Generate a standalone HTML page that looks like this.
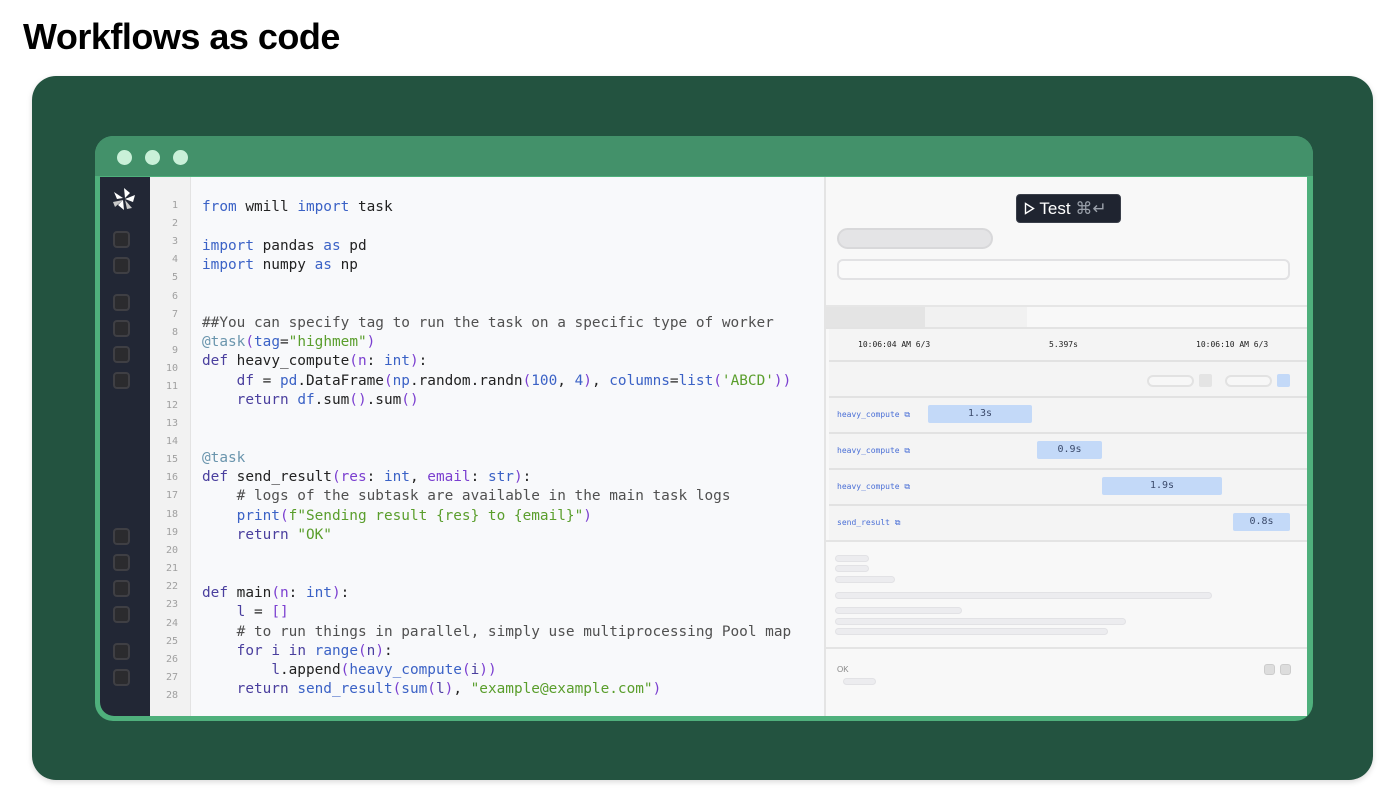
<!DOCTYPE html>
<html><head><meta charset="utf-8"><style>
*{margin:0;padding:0;box-sizing:border-box}
body{width:1398px;height:804px;background:#fff;position:relative;overflow:hidden;font-family:"Liberation Sans",sans-serif}
.abs{position:absolute}
h1{position:absolute;left:23px;top:16px;font-size:36px;font-weight:bold;color:#000;letter-spacing:-0.5px}
.outer{left:32px;top:76px;width:1341px;height:704px;background:#235340;border-radius:24px;box-shadow:0 2px 6px rgba(0,0,0,.15)}
.win{left:95px;top:136px;width:1218px;height:585px;background:#4fb07c;border-radius:18px;overflow:hidden}
.title{left:0;top:0;width:1218px;height:40px;background:#43916a}
.dot{top:14px;width:15px;height:15px;border-radius:50%;background:#c9f0d8}
.side{left:5px;top:41px;width:50px;height:539px;background:#222735;border-radius:0 0 0 14px}
.sq{left:13px;width:17px;height:17px;border-radius:4px;background:#2b2b2e;border:2px solid #3f3f44}
.gut{left:55px;top:41px;width:41px;height:539px;background:#f2f2f2;border-right:1px solid #e3e3e3;z-index:1}
.ln{position:absolute;right:12px;font:10px "DejaVu Sans Mono",monospace;color:#a0a0a0}
.code{left:94px;top:41px;width:637px;height:539px;background:#f8f9fb;border-right:2px solid #e4e4e4}
pre{position:absolute;left:107px;top:62px;font:14.4px/19.3px "DejaVu Sans Mono",monospace;color:#222;z-index:2}
.k{color:#3b62c6}.d{color:#4a3f9e}.s{color:#5a9e2c}.c{color:#505050}.a{color:#6a95ad}.p{color:#7b3fd0}.b{color:#3b62c6}
.right{left:731px;top:41px;width:481px;height:539px;background:#f8f8f8}
.mono{font-family:"DejaVu Sans Mono",monospace}
.row{left:3px;width:478px;height:36px;border-top:2px solid #e2e2e2;background:#f4f4f4}
.lab{position:absolute;left:8px;top:12px;font:8px "DejaVu Sans Mono",monospace;color:#4a6fd6}
.bar{position:absolute;top:7px;height:18px;background:#c3d9f8;border-radius:2px;font:10px "DejaVu Sans Mono",monospace;color:#3b4a6b;text-align:center;line-height:18px}
.sk{position:absolute;height:7px;border-radius:4px;background:#ececef;border:1px solid #e2e2e5}
</style></head><body>
<h1>Workflows as code</h1>
<div class="abs outer"></div>
<div class="abs win">
 <div class="abs title"></div>
 <div class="abs dot" style="left:22px"></div><div class="abs dot" style="left:50px"></div><div class="abs dot" style="left:78px"></div>
 <div class="abs side">
  <svg class="abs" style="left:11px;top:9px" width="26" height="26" viewBox="0 0 26 26"><g fill="#fff"><polygon points="3,6 12,12 6,13"/><polygon points="13,2 14,12 19,7"/><polygon points="24,9 14,13 22,16"/><polygon points="13,24 12,14 7,19"/><polygon points="2,16 12,14 4,21" fill="#c9c9c9"/><polygon points="21,22 14,14 16,23" fill="#c9c9c9"/></g></svg>
  <div class="abs sq" style="top:54px"></div><div class="abs sq" style="top:80px"></div>
  <div class="abs sq" style="top:117px"></div><div class="abs sq" style="top:143px"></div>
  <div class="abs sq" style="top:169px"></div><div class="abs sq" style="top:195px"></div>
  <div class="abs sq" style="top:351px"></div><div class="abs sq" style="top:377px"></div>
  <div class="abs sq" style="top:403px"></div><div class="abs sq" style="top:429px"></div>
  <div class="abs sq" style="top:466px"></div><div class="abs sq" style="top:492px"></div>
 </div>
 <div class="abs code"></div>
 <div class="abs gut">
  <div class="ln" style="top:23px">1</div><div class="ln" style="top:41px">2</div><div class="ln" style="top:59px">3</div><div class="ln" style="top:77px">4</div><div class="ln" style="top:95px">5</div><div class="ln" style="top:114px">6</div><div class="ln" style="top:132px">7</div><div class="ln" style="top:150px">8</div><div class="ln" style="top:168px">9</div><div class="ln" style="top:186px">10</div><div class="ln" style="top:204px">11</div><div class="ln" style="top:223px">12</div><div class="ln" style="top:241px">13</div><div class="ln" style="top:259px">14</div><div class="ln" style="top:277px">15</div><div class="ln" style="top:295px">16</div><div class="ln" style="top:313px">17</div><div class="ln" style="top:332px">18</div><div class="ln" style="top:350px">19</div><div class="ln" style="top:368px">20</div><div class="ln" style="top:386px">21</div><div class="ln" style="top:404px">22</div><div class="ln" style="top:422px">23</div><div class="ln" style="top:441px">24</div><div class="ln" style="top:459px">25</div><div class="ln" style="top:477px">26</div><div class="ln" style="top:495px">27</div><div class="ln" style="top:513px">28</div>
 </div>
<pre><span class="k">from</span> wmill <span class="k">import</span> task

<span class="k">import</span> pandas <span class="k">as</span> pd
<span class="k">import</span> numpy <span class="k">as</span> np


<span class="c">##You can specify tag to run the task on a specific type of worker</span>
<span class="a">@task</span><span class="p">(</span><span class="b">tag</span>=<span class="s">"highmem"</span><span class="p">)</span>
<span class="d">def</span> heavy_compute<span class="p">(</span><span class="p">n</span>: <span class="b">int</span><span class="p">)</span>:
    <span class="d">df</span> = <span class="b">pd</span>.DataFrame<span class="p">(</span><span class="b">np</span>.random.randn<span class="p">(</span><span class="b">100</span>, <span class="b">4</span><span class="p">)</span>, <span class="b">columns</span>=<span class="b">list</span><span class="p">(</span><span class="s">'ABCD'</span><span class="p">))</span>
    <span class="d">return</span> <span class="b">df</span>.sum<span class="p">()</span>.sum<span class="p">()</span>


<span class="a">@task</span>
<span class="d">def</span> send_result<span class="p">(res</span>: <span class="b">int</span>, <span class="p">email</span>: <span class="b">str</span><span class="p">)</span>:
    <span class="c"># logs of the subtask are available in the main task logs</span>
    <span class="b">print</span><span class="p">(</span><span class="s">f"Sending result {res} to {email}"</span><span class="p">)</span>
    <span class="d">return</span> <span class="s">"OK"</span>


<span class="d">def</span> main<span class="p">(n</span>: <span class="b">int</span><span class="p">)</span>:
    <span class="d">l</span> = <span class="p">[]</span>
    <span class="c"># to run things in parallel, simply use multiprocessing Pool map</span>
    <span class="d">for</span> <span class="d">i</span> <span class="d">in</span> <span class="b">range</span><span class="p">(</span><span class="d">n</span><span class="p">)</span>:
        <span class="d">l</span>.append<span class="p">(</span><span class="b">heavy_compute</span><span class="p">(</span><span class="d">i</span><span class="p">))</span>
    <span class="d">return</span> <span class="b">send_result</span><span class="p">(</span><span class="b">sum</span><span class="p">(</span><span class="d">l</span><span class="p">)</span>, <span class="s">"example@example.com"</span><span class="p">)</span></pre>
 <div class="abs right">
  <div class="abs" style="left:190px;top:17px;width:105px;height:29px;background:#1f2430;border:1px solid #3a3f4a;border-radius:4px;color:#fff;font-size:17px;line-height:27px;padding-left:7px">
   <svg width="11" height="13" viewBox="0 0 11 13" style="vertical-align:-1px"><polygon points="1.5,1.5 9.5,6.5 1.5,11.5" fill="none" stroke="#fff" stroke-width="1.4"/></svg> Test <span style="color:#9aa0aa">⌘↵</span></div>
  <div class="abs" style="left:11px;top:51px;width:156px;height:21px;border-radius:11px;background:#e4e4e6;border:2px solid #d8d8da"></div>
  <div class="abs" style="left:11px;top:82px;width:453px;height:21px;border-radius:6px;background:#fafafa;border:2px solid #e2e2e4"></div>
  <div class="abs" style="left:0;top:128px;width:481px;height:2px;background:#e6e6e6"></div>
  <div class="abs" style="left:0;top:130px;width:99px;height:20px;background:#e4e4e4"></div>
  <div class="abs" style="left:99px;top:130px;width:102px;height:20px;background:#f1f1f1"></div>
  <div class="abs" style="left:0;top:150px;width:481px;height:2px;background:#e3e3e3"></div>
  <div class="abs mono" style="left:3px;top:152px;width:478px;height:31px;background:#f4f4f4;font-size:8px;color:#222">
   <span class="abs" style="left:29px;top:11px">10:06:04 AM 6/3</span><span class="abs" style="left:220px;top:11px">5.397s</span><span class="abs" style="left:367px;top:11px">10:06:10 AM 6/3</span></div>
  <div class="abs row" style="top:183px">
   <div class="abs" style="left:318px;top:13px;width:47px;height:12px;border:2px solid #e2e2e2;border-radius:7px;background:#f7f7f7"></div>
   <div class="abs" style="left:370px;top:12px;width:13px;height:13px;background:#e4e4e4;border-radius:2px"></div>
   <div class="abs" style="left:396px;top:13px;width:47px;height:12px;border:2px solid #e2e2e2;border-radius:7px;background:#f7f7f7"></div>
   <div class="abs" style="left:448px;top:12px;width:13px;height:13px;background:#c3d9f8;border-radius:2px"></div>
  </div>
  <div class="abs row" style="top:219px"><span class="lab">heavy_compute ⧉</span><div class="bar" style="left:99px;width:104px">1.3s</div></div>
  <div class="abs row" style="top:255px"><span class="lab">heavy_compute ⧉</span><div class="bar" style="left:208px;width:65px">0.9s</div></div>
  <div class="abs row" style="top:291px"><span class="lab">heavy_compute ⧉</span><div class="bar" style="left:273px;width:120px">1.9s</div></div>
  <div class="abs row" style="top:327px"><span class="lab">send_result ⧉</span><div class="bar" style="left:404px;width:57px">0.8s</div></div>
  <div class="abs" style="left:0;top:363px;width:481px;height:2px;background:#e4e4e4"></div>
  <div class="sk" style="left:9px;top:378px;width:34px"></div><div class="sk" style="left:9px;top:388px;width:34px"></div><div class="sk" style="left:9px;top:399px;width:60px"></div>
  <div class="sk" style="left:9px;top:415px;width:377px"></div>
  <div class="sk" style="left:9px;top:430px;width:127px"></div><div class="sk" style="left:9px;top:441px;width:291px"></div><div class="sk" style="left:9px;top:451px;width:273px"></div>
  <div class="abs" style="left:0;top:470px;width:481px;height:2px;background:#e4e4e4"></div>
  <span class="abs" style="left:11px;top:488px;font-size:8px;color:#888">OK</span>
  <div class="sk" style="left:17px;top:501px;width:33px"></div>
  <div class="abs" style="left:438px;top:487px;width:11px;height:11px;border-radius:3px;background:#ddd;border:1px solid #ccc"></div>
  <div class="abs" style="left:454px;top:487px;width:11px;height:11px;border-radius:3px;background:#ddd;border:1px solid #ccc"></div>
 </div>
</div>
</body></html>
